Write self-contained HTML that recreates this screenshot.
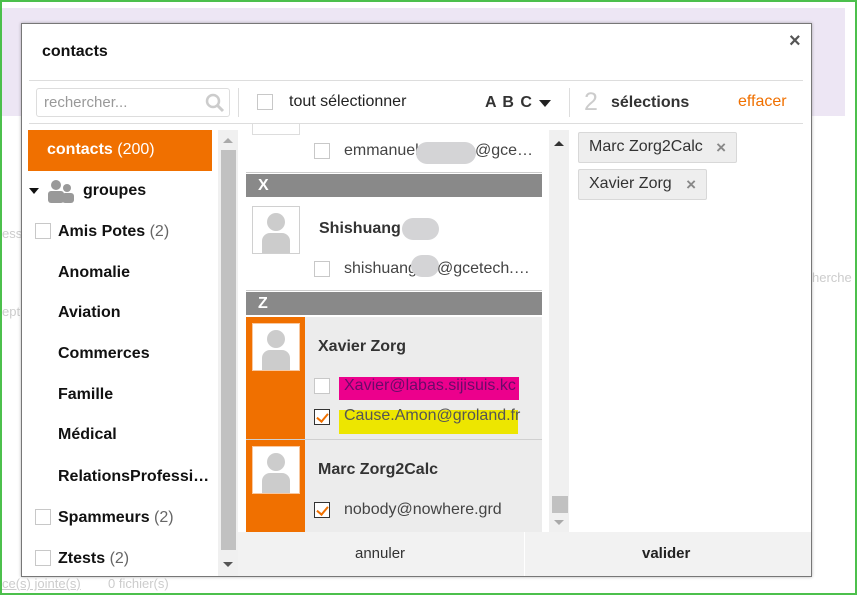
<!DOCTYPE html>
<html><head><meta charset="utf-8"><style>
*{margin:0;padding:0;box-sizing:border-box}
body{width:857px;height:595px;overflow:hidden;position:relative;background:#fff;font-family:"Liberation Sans",Arial,sans-serif;color:#222}
.a{position:absolute}
.cb{position:absolute;width:16px;height:16px;border:1px solid #c8c8c8;background:#fff}
.cbk{border:1px solid #333}
.cbk:after{content:"";position:absolute;left:4px;top:1px;width:5px;height:9px;border-right:2.5px solid #f07000;border-bottom:2.5px solid #f07000;transform:rotate(40deg)}
.grp{position:absolute;left:58px;font-size:16px;font-weight:bold;color:#111}
.grp span{font-weight:normal;color:#666}
.av{position:absolute;width:48px;height:48px;border:1px solid #d0d0d0;background:#fff;overflow:hidden}
.av:before{content:"";position:absolute;left:14px;top:6px;width:18px;height:18px;border-radius:50%;background:#ccc}
.av:after{content:"";position:absolute;left:9px;top:26px;width:28px;height:22px;border-radius:8px 8px 2px 2px;background:#ccc}
.em{position:absolute;font-size:16px;color:#444;white-space:nowrap}
.blur{position:absolute;background:#d4d4d6;border-radius:12px}
.nm{position:absolute;font-size:16px;font-weight:bold;color:#333}
.hd{position:absolute;left:246px;width:296px;height:23px;background:#898989;color:#fff;font-weight:bold;font-size:16px;padding:3px 0 0 12px}
.tag{position:absolute;height:31px;border:1px solid #d8d8d8;background:#eee;font-size:16px;color:#333;padding:5px 0 0 10px;border-radius:2px}
.tag b{position:absolute;right:10px;top:5px;color:#888;font-size:17px}
</style></head><body>
<div class="a" style="left:0;top:0;width:857px;height:595px;border:2px solid #4cc04c"></div>
<div class="a" style="left:2px;top:8px;width:843px;height:108px;background:#ede6f4"></div>
<div class="a" style="left:2px;top:304px;width:20px;font-size:13px;color:#ccc">ept</div>
<div class="a" style="left:2px;top:226px;width:20px;font-size:13px;color:#ccc">ess</div>
<div class="a" style="left:2px;top:576px;font-size:13px;color:#ccc;text-decoration:underline">ce(s) jointe(s)</div>
<div class="a" style="left:108px;top:576px;font-size:13px;color:#ccc">0 fichier(s)</div>
<div class="a" style="left:812px;top:270px;font-size:13px;color:#ccc">herche</div>
<!-- dialog -->
<div class="a" style="left:21px;top:23px;width:791px;height:554px;background:#fff;border:1px solid #777;box-shadow:0 0 3px rgba(0,0,0,.3)"></div>
<div class="a" style="left:42px;top:43px;font-size:16px;font-weight:bold;color:#111">contacts</div>
<div class="a" style="left:789px;top:30px;font-size:20px;font-weight:bold;color:#555">×</div>
<div class="a" style="left:29px;top:80px;width:774px;height:1px;background:#ddd"></div>
<div class="a" style="left:36px;top:88px;width:194px;height:29px;border:1px solid #ddd;border-radius:3px"></div>
<div class="a" style="left:44px;top:94px;font-size:15px;color:#999">rechercher...</div>
<svg class="a" style="left:205px;top:93px" width="20" height="20"><circle cx="8" cy="8" r="6" fill="none" stroke="#ccc" stroke-width="2.5"/><line x1="12" y1="12" x2="18" y2="18" stroke="#ccc" stroke-width="3"/></svg>
<div class="a" style="left:238px;top:88px;width:1px;height:29px;background:#ddd"></div>
<div class="cb" style="left:257px;top:94px"></div>
<div class="a" style="left:289px;top:93px;font-size:16px;color:#222">tout sélectionner</div>
<div class="a" style="left:485px;top:94px;font-size:16px;font-weight:bold;color:#333;letter-spacing:1px">A B C</div>
<div class="a" style="left:539px;top:100px;border-left:6px solid transparent;border-right:6px solid transparent;border-top:7px solid #222"></div>
<div class="a" style="left:569px;top:88px;width:1px;height:29px;background:#ddd"></div>
<div class="a" style="left:584px;top:88px;font-size:25px;color:#ccc">2</div>
<div class="a" style="left:611px;top:94px;font-size:16px;font-weight:bold;color:#333">sélections</div>
<div class="a" style="left:738px;top:93px;font-size:16px;color:#f07000">effacer</div>
<div class="a" style="left:29px;top:123px;width:774px;height:1px;background:#ddd"></div>
<!-- left -->
<div class="a" style="left:28px;top:130px;width:184px;height:41px;background:#f07000"></div>
<div class="a" style="left:47px;top:141px;font-size:16px;font-weight:bold;color:#fff">contacts <span style="font-weight:normal">(200)</span></div>
<div class="a" style="left:29px;top:188px;border-left:5px solid transparent;border-right:5px solid transparent;border-top:6px solid #111"></div>
<svg class="a" style="left:47px;top:179px" width="28" height="25"><circle cx="9" cy="6" r="5" fill="#999"/><circle cx="20" cy="9" r="4" fill="#999"/><rect x="1" y="12" width="16" height="12" rx="3" fill="#999"/><rect x="15" y="14" width="12" height="10" rx="3" fill="#999"/></svg>
<div class="a" style="left:83px;top:182px;font-size:16px;font-weight:bold;color:#111">groupes</div>
<div class="cb" style="left:35px;top:223px"></div><div class="grp" style="top:223px">Amis Potes <span>(2)</span></div>
<div class="grp" style="top:264px">Anomalie</div>
<div class="grp" style="top:304px">Aviation</div>
<div class="grp" style="top:345px">Commerces</div>
<div class="grp" style="top:386px">Famille</div>
<div class="grp" style="top:426px">Médical</div>
<div class="grp" style="top:468px">RelationsProfessi…</div>
<div class="cb" style="left:35px;top:509px"></div><div class="grp" style="top:509px">Spammeurs <span>(2)</span></div>
<div class="cb" style="left:35px;top:550px"></div><div class="grp" style="top:550px">Ztests <span>(2)</span></div>
<div class="a" style="left:218px;top:130px;width:20px;height:446px;background:#f0f0f0"></div>
<div class="a" style="left:221px;top:150px;width:15px;height:400px;background:#c1c1c1"></div>
<div class="a" style="left:223px;top:138px;border-left:5px solid transparent;border-right:5px solid transparent;border-bottom:5px solid #aaa"></div>
<div class="a" style="left:223px;top:562px;border-left:5px solid transparent;border-right:5px solid transparent;border-top:5px solid #555"></div>
<!-- middle -->
<div class="a" style="left:252px;top:124px;width:48px;height:11px;border:1px solid #ddd;border-top:none"></div>
<div class="cb" style="left:314px;top:143px"></div>
<div class="em" style="left:344px;top:142px">emmanuel</div><div class="blur" style="left:416px;top:142px;width:60px;height:22px"></div><div class="em" style="left:475px;top:142px">@gce…</div>
<div class="a" style="left:246px;top:172px;width:296px;height:1px;background:#ccc"></div>
<div class="hd" style="top:174px">X</div>
<div class="av" style="left:252px;top:206px"></div>
<div class="nm" style="left:319px;top:220px">Shishuang</div><div class="blur" style="left:402px;top:218px;width:37px;height:22px"></div>
<div class="cb" style="left:314px;top:261px"></div>
<div class="em" style="left:344px;top:260px">shishuang</div><div class="blur" style="left:411px;top:255px;width:28px;height:22px"></div><div class="em" style="left:437px;top:260px">@gcetech.…</div>
<div class="a" style="left:246px;top:290px;width:296px;height:1px;background:#ccc"></div>
<div class="hd" style="top:292px">Z</div>
<div class="a" style="left:246px;top:317px;width:296px;height:215px;background:#ececec"></div>
<div class="a" style="left:246px;top:317px;width:59px;height:215px;background:#f07000"></div>
<div class="a" style="left:246px;top:439px;width:296px;height:1px;background:#d0d0d0"></div>
<div class="av" style="left:252px;top:323px;border:1px solid #f8c8a0"></div>
<div class="nm" style="left:318px;top:338px">Xavier Zorg</div>
<div class="cb" style="left:314px;top:378px"></div>
<div class="a" style="left:339px;top:377px;width:180px;height:23px;background:#ec008c"></div>
<div class="em" style="left:344px;top:377px;color:#6a0a6a">Xavier@labas.sijisuis.kc</div>
<div class="cb cbk" style="left:314px;top:409px"></div>
<div class="a" style="left:339px;top:410px;width:179px;height:24px;background:#ede600"></div>
<div class="em" style="left:344px;top:407px;color:#555">Cause.Amon@groland.fr</div>
<div class="av" style="left:252px;top:446px;border:1px solid #f8c8a0"></div>
<div class="nm" style="left:318px;top:461px">Marc Zorg2Calc</div>
<div class="cb cbk" style="left:314px;top:502px"></div>
<div class="em" style="left:344px;top:501px">nobody@nowhere.grd</div>
<div class="a" style="left:549px;top:130px;width:20px;height:402px;background:#f0f0f0"></div>
<div class="a" style="left:554px;top:141px;border-left:5px solid transparent;border-right:5px solid transparent;border-bottom:5px solid #333"></div>
<div class="a" style="left:552px;top:496px;width:16px;height:17px;background:#c1c1c1"></div>
<div class="a" style="left:554px;top:520px;border-left:5px solid transparent;border-right:5px solid transparent;border-top:5px solid #aaa"></div>
<!-- right -->
<div class="tag" style="left:578px;top:132px;width:159px">Marc Zorg2Calc<b>×</b></div>
<div class="tag" style="left:578px;top:169px;width:129px">Xavier Zorg<b>×</b></div>
<!-- footer -->
<div class="a" style="left:238px;top:532px;width:286px;height:44px;background:#f2f2f2"></div>
<div class="a" style="left:525px;top:532px;width:286px;height:44px;background:#f2f2f2"></div>
<div class="a" style="left:355px;top:545px;font-size:15px;color:#333">annuler</div>
<div class="a" style="left:642px;top:545px;font-size:15px;font-weight:bold;color:#222">valider</div>
</body></html>
